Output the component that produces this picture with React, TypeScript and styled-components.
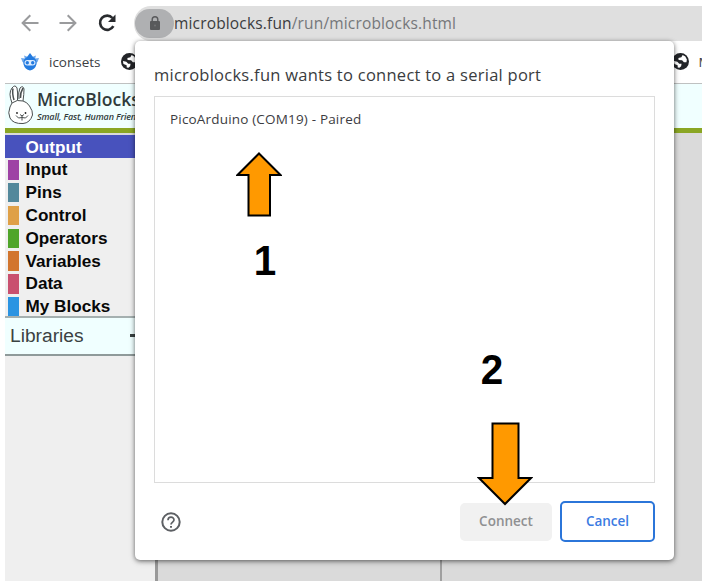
import React from "react";
import styled, { createGlobalStyle } from "styled-components";

const GlobalStyle = createGlobalStyle`
  body { margin: 0; background: #fff; overflow: hidden; }
  * { box-sizing: border-box; }
`;

const ui = `"Open Sans", "Noto Sans", sans-serif`;
const sans = `"Liberation Sans", Arial, sans-serif`;

const Page = styled.div`
  position: relative;
  width: 702px;
  height: 583px;
  padding: 0 0 2px 5px;
  display: flex;
  flex-direction: column;
  background: #fff;
  overflow: hidden;
`;

const Toolbar = styled.div`
  display: flex;
  align-items: center;
  height: 41px;
  padding: 6px 0 1px 12px;
  flex: none;
`;

const NavButton = styled.button<{ $gap: number }>`
  display: flex;
  width: 25px;
  height: 24px;
  margin-right: ${(p) => p.$gap}px;
  padding: 0;
  border: 0;
  background: none;
  flex: none;
  align-items: center;
  justify-content: center;
`;

const AddressBar = styled.div`
  display: flex;
  align-items: center;
  flex: 1;
  height: 35px;
  border-radius: 17px 0 0 17px;
  background: #dfdfdf;
`;

const LockChip = styled.span`
  display: flex;
  width: 39px;
  height: 29px;
  margin-left: 1px;
  border-radius: 15px;
  background: #afb0b2;
  align-items: center;
  justify-content: center;
`;

const Url = styled.span`
  font: 15.5px/22px ${ui};
  letter-spacing: 0.16px;
  color: #3b3c3e;
  white-space: nowrap;
`;

const UrlPath = styled.span`
  color: #75777a;
`;

const Bookmarks = styled.div`
  display: flex;
  align-items: center;
  height: 43px;
  padding: 0 0 1px 16px;
  flex: none;
  overflow: hidden;
  border-bottom: 1px solid #bfc1c1;

  & > * {
    flex: none;
  }
`;

const BookmarkText = styled.span<{ $left: number }>`
  margin-left: ${(p) => p.$left}px;
  font: 13.5px/20px ${ui};
  color: #3c4043;
  white-space: nowrap;
`;

const GlobeSlot = styled.span<{ $left: number }>`
  display: flex;
  margin-left: ${(p) => p.$left}px;
`;

const Header = styled.header`
  display: flex;
  height: 49px;
  flex: none;
  background: #f0ffff;
  border-bottom: 5px solid #8aa624;
`;

const Brand = styled.div`
  display: flex;
  flex-direction: column;
  padding: 4px 0 0 1px;
  white-space: nowrap;
`;

const BrandName = styled.span`
  font: 600 17.5px/23px ${ui};
  letter-spacing: 0.05px;
  color: #303b3c;
`;

const Tagline = styled.span`
  font: italic 600 9px/11px ${ui};
  letter-spacing: -0.15px;
  color: #303b3c;
`;

const Workspace = styled.main`
  display: flex;
  flex: 1;
  padding-top: 2px;
  background: #dadada;
`;

const Sidebar = styled.aside`
  width: 150px;
  background: #efefef;
`;

const Category = styled.div<{ $selected?: boolean }>`
  display: flex;
  align-items: center;
  height: 22.8px;
  padding: 0.4px 0 0 3px;
  background: ${(p) => (p.$selected ? "#4852bd" : "transparent")};
  color: ${(p) => (p.$selected ? "#fff" : "#080808")};
  font: bold 17.15px/22px ${sans};
`;

const Swatch = styled.span<{ $color: string }>`
  width: 11px;
  height: 19.4px;
  margin: 1px 6.5px 0 0;
  background: ${(p) => p.$color};
`;

const Libraries = styled.div`
  display: flex;
  align-items: center;
  justify-content: space-between;
  height: 40px;
  padding: 0 11px 1px 5px;
  margin-top: -1px;
  border-top: 2px solid #a5b0b0;
  border-bottom: 2px solid #8f9a9a;
  background: #f0ffff;
  font: 19.2px/26px ${sans};
  color: #3b4242;
`;

const Plus = styled.span`
  width: 14px;
  height: 3px;
  background: #3b4242;
`;

const Palette = styled.div`
  width: 287px;
  border-left: 3px solid #999;
  border-right: 2px solid #a0a0a0;
`;

const Dialog = styled.section`
  position: absolute;
  left: 135px;
  top: 41px;
  width: 539px;
  height: 519px;
  padding: 22px 19px 18px;
  display: flex;
  flex-direction: column;
  border-radius: 5px;
  background: #fff;
  box-shadow: 0 1px 4px rgba(0, 0, 0, 0.5), 0 2px 7px rgba(0, 0, 0, 0.15);
`;

const Title = styled.h1`
  margin: 0 0 9px;
  height: 24px;
  font: 16.5px/24px ${ui};
  letter-spacing: 0.26px;
  color: #3a3c40;
  white-space: nowrap;
`;

const PortList = styled.div`
  width: 501px;
  height: 387px;
  padding: 12px 15px;
  border: 1px solid #dcdcdc;
`;

const Port = styled.div`
  font: 13.5px/20px ${ui};
  letter-spacing: 0.18px;
  color: #3c3c42;
  white-space: nowrap;
`;

const Footer = styled.footer`
  display: flex;
  align-items: center;
  margin-top: 18px;
  padding-left: 7px;
  height: 41px;
`;

const Button = styled.button<{ $primary?: boolean }>`
  width: ${(p) => (p.$primary ? 95 : 92)}px;
  height: ${(p) => (p.$primary ? 41 : 38)}px;
  padding: 0 0 1px;
  margin-left: ${(p) => (p.$primary ? "8px" : "auto")};
  border: ${(p) => (p.$primary ? "2px solid #2b75d9" : "0")};
  border-radius: 5px;
  background: ${(p) => (p.$primary ? "#fff" : "#f1f1f1")};
  color: ${(p) => (p.$primary ? "#3b7be2" : "#8f9092")};
  font: 600 13.5px/20px ${ui};
`;

const Marker = styled.div<{ $x: number; $y: number }>`
  position: absolute;
  left: ${(p) => p.$x}px;
  top: ${(p) => p.$y}px;
  font: bold 43px/43px ${sans};
  transform: scaleX(0.94);
  color: #000;
`;

const ArrowMark = styled.svg<{ $x: number; $y: number }>`
  position: absolute;
  left: ${(p) => p.$x}px;
  top: ${(p) => p.$y}px;
  fill: #ff9900;
  stroke: #000;
  stroke-width: 2;
`;

const Globe = () => (
  <svg width="17" height="17" viewBox="0 0 16 16">
    <circle cx="8" cy="8" r="8" fill="#222428" />
    <path d="M1.8 7.5 L5 8.2 L6.8 10 L9 10.2 L8.6 12.4 L7 13.8 L5.4 13.6 L5.3 11.5 L2.3 10.3Z M10 1.9 L8.8 4 L6 4.8 L6.2 6.6 L9.5 6.8 L11.2 8.8 L13.6 8.8 L14 6.2 L12.5 3.3Z" fill="#fff" />
  </svg>
);

const Robot = () => (
  <svg width="18" height="18" viewBox="0 0 18 18" fill="#237be0">
    <path d="M9 0 L12 4 Q16 6 15.6 11 Q14 17 9 17.4 Q4 17 2.4 11 Q2 6 6 4Z" />
    <path d="M0 5 L4 5.5 L4 10.5 L1.5 9Z M18 5 L14 5.5 L14 10.5 L16.5 9Z M3 2.5 L7 4 L4 6Z M15 2.5 L11 4 L14 6Z" opacity="0.65" />
    <rect x="3.5" y="7" width="11" height="5.5" rx="2.7" fill="#d9eaff" />
    <circle cx="6.3" cy="9.8" r="1.7" />
    <circle cx="11.7" cy="9.8" r="1.7" />
  </svg>
);

const Rabbit = () => (
  <svg width="31" height="44" viewBox="0 0 31 44" fill="#fff" stroke="#4a4f50" strokeWidth="1">
    <path d="M7 19 Q3 9 7 4 Q10 0 12 4 Q13 8 12.5 16 M14 15 Q13 8 15 4 Q18 1 19 5 Q19 10 18 17" />
    <path d="M8 4.5 Q7 9 9 16 M18 4 Q15 9 15.5 14" fill="none" strokeWidth="1.5" />
    <path d="M7 19 Q12 15 18 17 Q22 18 24.5 22 Q28 27 27.5 31 Q25 39 18 39.5 Q8 40 5 34 Q2.5 29 5 23 Q6 21 7 19Z" />
    <path d="M11 31.5 Q13 35.5 17 33.5 Q21 35.5 23 31.5 M17 31 V36.5 M15 30.5 L17 32 L19 30.5" fill="none" />
    <circle cx="12" cy="29" r="0.9" fill="#222" stroke="none" />
    <circle cx="20.5" cy="29" r="0.9" fill="#222" stroke="none" />
  </svg>
);

const categories = [
  ["Output", "#4852bd"],
  ["Input", "#9e42a5"],
  ["Pins", "#53889b"],
  ["Control", "#dfa047"],
  ["Operators", "#4fa52a"],
  ["Variables", "#d2752e"],
  ["Data", "#c9506f"],
  ["My Blocks", "#2b94e2"],
];

export default function App() {
  return (
    <>
      <GlobalStyle />
      <Page>
        <Toolbar>
          <NavButton $gap={13}>
            <svg width="18" height="18" viewBox="0 0 18 18" fill="none" stroke="#9a9b9d" strokeWidth="2">
              <path d="M17.5 9 H2 M9.3 1.3 L1.6 9 L9.3 16.7" />
            </svg>
          </NavButton>
          <NavButton $gap={14}>
            <svg width="18" height="18" viewBox="0 0 18 18" fill="none" stroke="#9a9b9d" strokeWidth="2">
              <path d="M0.5 9 H16 M8.7 1.3 L16.4 9 L8.7 16.7" />
            </svg>
          </NavButton>
          <NavButton $gap={15}>
            <svg width="18" height="18" viewBox="0 0 18 18" fill="none" stroke="#292b2e" strokeWidth="2.6">
              <path d="M15.4 12.2 A7.1 7.1 0 1 1 14.5 4" />
              <path d="M17.5 0.5 V8 H10Z" fill="#292b2e" stroke="none" />
            </svg>
          </NavButton>
          <AddressBar>
            <LockChip>
              <svg width="10" height="14" viewBox="0 0 10 14">
                <rect y="5" width="10" height="9" rx="1" fill="#58595b" />
                <path d="M2.2 6 V3.6 A2.8 2.8 0 0 1 7.8 3.6 V6" fill="none" stroke="#58595b" strokeWidth="1.4" />
                <circle cx="5" cy="9.5" r="1.1" fill="#707173" />
              </svg>
            </LockChip>
            <Url>microblocks.fun<UrlPath>/run/microblocks.html</UrlPath></Url>
          </AddressBar>
        </Toolbar>
        <Bookmarks>
          <Robot />
          <BookmarkText $left={10}>iconsets</BookmarkText>
          <GlobeSlot $left={20}><Globe /></GlobeSlot>
          <GlobeSlot $left={534}><Globe /></GlobeSlot>
          <BookmarkText $left={10}>M</BookmarkText>
        </Bookmarks>
        <Header>
          <Rabbit />
          <Brand>
            <BrandName>MicroBlocks</BrandName>
            <Tagline>Small, Fast, Human Friendly</Tagline>
          </Brand>
        </Header>
        <Workspace>
          <Sidebar>
            {categories.map(([name, color], i) => (
              <Category key={name} $selected={i === 0}>
                <Swatch $color={color} />
                {name}
              </Category>
            ))}
            <Libraries>Libraries<Plus /></Libraries>
          </Sidebar>
          <Palette />
        </Workspace>
        <Dialog>
          <Title>microblocks.fun wants to connect to a serial port</Title>
          <PortList>
            <Port>PicoArduino (COM19) - Paired</Port>
          </PortList>
          <Footer>
            <svg width="20" height="20" viewBox="0 0 20 20" fill="none" stroke="#5d6064" strokeWidth="2">
              <circle cx="10" cy="10" r="8.7" />
              <path d="M7 8.2 C7 4.2 13 4.2 13 8 C13 10 10 10.2 10 12.6" strokeWidth="1.7" />
              <path d="M10 14 V15.8" />
            </svg>
            <Button>Connect</Button>
            <Button $primary>Cancel</Button>
          </Footer>
        </Dialog>
        <ArrowMark $x={236} $y={151} width="46" height="67" viewBox="0 0 46 67">
          <path d="M23 2.5 L44.5 24 H34 V64.5 H12.5 V24 H1.5Z" />
        </ArrowMark>
        <Marker $x={253} $y={239}>1</Marker>
        <Marker $x={480} $y={348}>2</Marker>
        <ArrowMark $x={477} $y={421} width="56" height="86" viewBox="0 0 56 86">
          <path d="M15.5 2.5 H41.5 V57 H54 L28 83 L2 57 H15.5Z" />
        </ArrowMark>
      </Page>
    </>
  );
}
